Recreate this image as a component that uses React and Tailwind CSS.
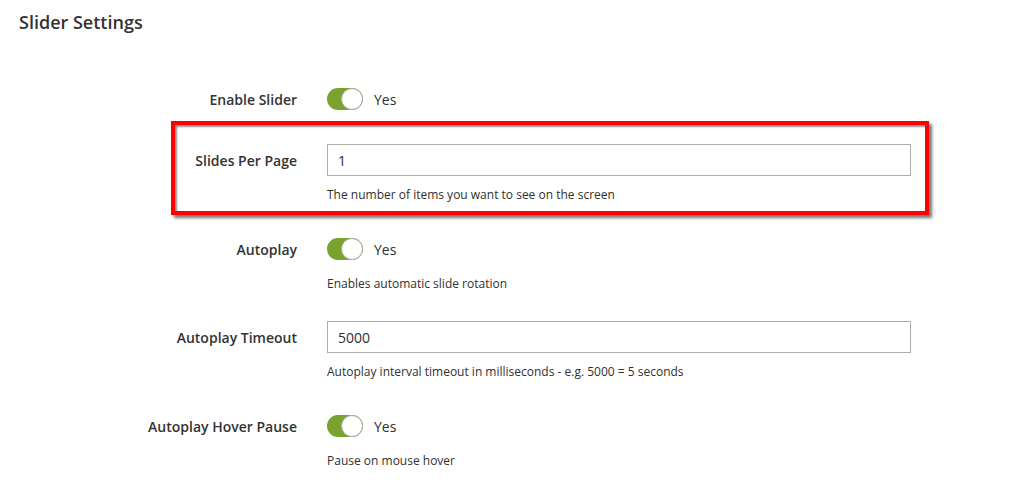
import React from "react";

const font = { fontFamily: '"Open Sans", "Noto Sans", sans-serif' };

function Toggle() {
  return (
    <div className="flex items-center">
      <div className="relative h-[22px] w-9 rounded-full bg-[#79a22e]">
        <div className="absolute right-0 top-0 h-[22px] w-[22px] rounded-full border border-[#adadad] bg-white" />
      </div>
      <span className="ml-[11px] text-[14px] text-[#303030]">Yes</span>
    </div>
  );
}

function Row({ label, children, className = "" }) {
  return (
    <div className={"flex items-center " + className}>
      <div className="w-[297px] text-right text-[14px] font-semibold text-[#333333]">{label}</div>
      <div className="ml-[30px] w-[584px]">{children}</div>
    </div>
  );
}

function Input({ value }) {
  return (
    <div className="flex h-8 items-center border border-[#adadad] bg-white px-[10px] text-[14px] text-[#303030]">
      {value}
    </div>
  );
}

function Note({ children, className = "" }) {
  return (
    <div className={"ml-[327px] text-[12px] leading-4 text-[#303030] " + className}>{children}</div>
  );
}

export default function App() {
  return (
    <div className="relative h-[481px] w-[1030px] overflow-hidden bg-white" style={font}>
      <div className="pl-[19px] pt-[10px] text-[18px] font-semibold leading-6 text-[#333333]">
        Slider Settings
      </div>

      <Row label="Enable Slider" className="mt-[54px]">
        <Toggle />
      </Row>

      <div className="relative">
        <Row label="Slides Per Page" className="mt-[34px]">
          <Input value="1" />
        </Row>
        <Note className="mt-[11px]">The number of items you want to see on the screen</Note>
        <div className="pointer-events-none absolute left-[171px] top-[-23px] h-[94px] w-[758px] border-4 border-[#ff0000] shadow-[3px_3px_3px_rgba(0,0,0,0.55),inset_2px_2px_2px_rgba(0,0,0,0.45)]" />
      </div>

      <Row label="Autoplay" className="mt-[35px]">
        <Toggle />
      </Row>
      <Note className="mt-[16px]">Enables automatic slide rotation</Note>

      <Row label="Autoplay Timeout" className="mt-[29px]">
        <Input value="5000" />
      </Row>
      <Note className="mt-[11px]">Autoplay interval timeout in milliseconds - e.g. 5000 = 5 seconds</Note>

      <Row label="Autoplay Hover Pause" className="mt-[35px]">
        <Toggle />
      </Row>
      <Note className="mt-[16px]">Pause on mouse hover</Note>
    </div>
  );
}
